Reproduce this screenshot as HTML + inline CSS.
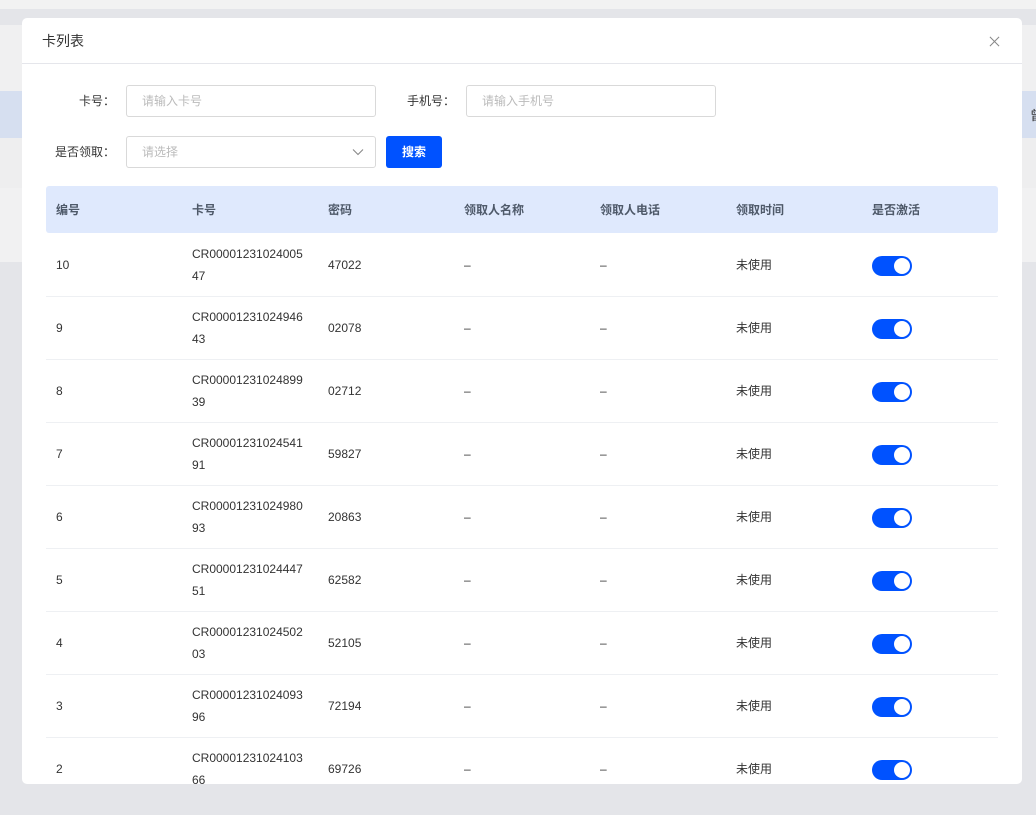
<!DOCTYPE html>
<html><head><meta charset="utf-8"><style>
*{margin:0;padding:0;box-sizing:border-box}
body{width:1036px;height:815px;overflow:hidden;background:#e4e5e9;font-family:"Liberation Sans","Noto Sans CJK SC",sans-serif;position:relative;color:#1d2129}
.bg{position:absolute;left:0;width:1036px}
.modal{position:absolute;left:22px;top:18px;width:1000px;height:766px;background:#fff;border-radius:5px;overflow:hidden}
.hd{height:46px;border-bottom:1px solid #e5e6eb;padding-left:20px;font-size:14px;line-height:46px;color:#333}
.x{position:absolute;right:22px;top:18px;width:11px;height:11px}
.lbl{position:absolute;font-size:12px;color:#333;text-align:right;line-height:32px;white-space:nowrap}
.inp{position:absolute;height:32px;border:1px solid #d9d9d9;border-radius:3px;font-size:12px;color:#bbb;line-height:30px;padding-left:15px}
.btn{position:absolute;left:364px;top:118px;width:56px;height:32px;background:#0052ff;color:#fff;border-radius:3px;font-size:12px;text-align:center;line-height:32px;font-weight:bold}
table{position:absolute;left:24px;top:168px;width:952px;border-collapse:collapse;font-size:12px}
th{height:47px;background:#dfe9fd;text-align:left;font-weight:bold;color:#4e5969;padding-left:10px;width:136px}
th:first-child{border-radius:3px 0 0 3px}th:last-child{border-radius:0 3px 3px 0}
td{height:63px;padding-left:10px;border-bottom:1px solid #eef0f3;color:#333;line-height:22px;padding-top:1px}
.sw{width:40px;height:20px;background:#0052ff;border-radius:10px;position:relative;margin-top:2px}
.sw:after{content:"";position:absolute;right:2px;top:2px;width:16px;height:16px;border-radius:50%;background:#fff}
</style></head><body>
<div class="bg" style="top:0;height:9px;background:#f2f2f2"></div>
<div class="bg" style="top:25px;height:66px;background:#f0f0f1"></div>
<div class="bg" style="top:91px;height:47px;background:#d6dff0"></div>
<div class="bg" style="top:138px;height:50px;background:#eeeeef"></div>
<div class="bg" style="top:188px;height:74px;background:#f1f1f2"></div>
<div style="position:absolute;left:1030px;top:105px;font-size:13px;color:#333">曾</div>
<div class="modal">
<div class="hd">卡列表</div>
<svg class="x" viewBox="0 0 12 12"><path d="M1 1L11 11M11 1L1 11" stroke="#888" stroke-width="1.1"/></svg>
<div class="lbl" style="right:907px;top:67px">卡号：</div>
<div class="inp" style="left:104px;top:67px;width:250px">请输入卡号</div>
<div class="lbl" style="right:567px;top:67px">手机号：</div>
<div class="inp" style="left:444px;top:67px;width:250px">请输入手机号</div>
<div class="lbl" style="right:907px;top:118px">是否领取：</div>
<div class="inp" style="left:104px;top:118px;width:250px">请选择<svg style="position:absolute;right:11px;top:11px" width="12" height="8" viewBox="0 0 12 8"><path d="M1 1.5L6 6.5L11 1.5" fill="none" stroke="#888" stroke-width="1.1"/></svg></div>
<div class="btn">搜索</div>
<table>
<tr><th>编号</th><th>卡号</th><th>密码</th><th>领取人名称</th><th>领取人电话</th><th>领取时间</th><th>是否激活</th></tr>
<tr><td>10</td><td>CR00001231024005<br>47</td><td>47022</td><td>–</td><td>–</td><td>未使用</td><td><div class="sw"></div></td></tr>
<tr><td>9</td><td>CR00001231024946<br>43</td><td>02078</td><td>–</td><td>–</td><td>未使用</td><td><div class="sw"></div></td></tr>
<tr><td>8</td><td>CR00001231024899<br>39</td><td>02712</td><td>–</td><td>–</td><td>未使用</td><td><div class="sw"></div></td></tr>
<tr><td>7</td><td>CR00001231024541<br>91</td><td>59827</td><td>–</td><td>–</td><td>未使用</td><td><div class="sw"></div></td></tr>
<tr><td>6</td><td>CR00001231024980<br>93</td><td>20863</td><td>–</td><td>–</td><td>未使用</td><td><div class="sw"></div></td></tr>
<tr><td>5</td><td>CR00001231024447<br>51</td><td>62582</td><td>–</td><td>–</td><td>未使用</td><td><div class="sw"></div></td></tr>
<tr><td>4</td><td>CR00001231024502<br>03</td><td>52105</td><td>–</td><td>–</td><td>未使用</td><td><div class="sw"></div></td></tr>
<tr><td>3</td><td>CR00001231024093<br>96</td><td>72194</td><td>–</td><td>–</td><td>未使用</td><td><div class="sw"></div></td></tr>
<tr><td>2</td><td>CR00001231024103<br>66</td><td>69726</td><td>–</td><td>–</td><td>未使用</td><td><div class="sw"></div></td></tr>
</table>
</div>
</body></html>
